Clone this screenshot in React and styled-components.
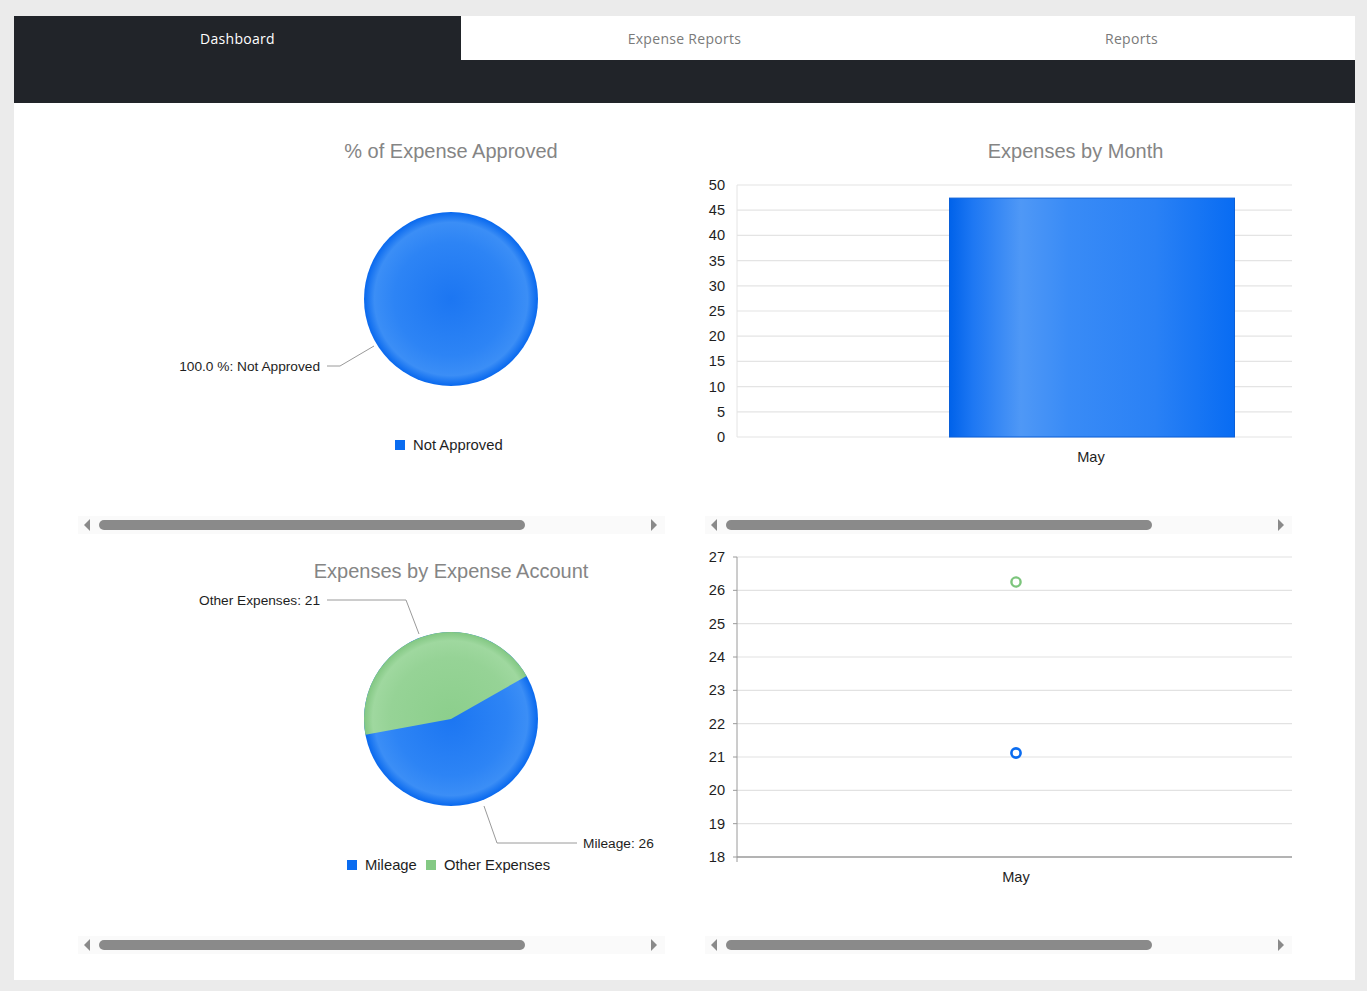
import React from "react";
import styled, { createGlobalStyle } from "styled-components";

const GlobalStyle = createGlobalStyle`
  body {
    margin: 0;
    background: #ebebeb;
    font-family: "Liberation Sans", Arial, sans-serif;
  }
`;

const Page = styled.div`
  padding: 16px 12px 11px 14px;
`;

const Shell = styled.div`
  background: #ffffff;
`;

const Header = styled.header`
  background: #212429;
  height: 87px;
`;

const TabBar = styled.nav`
  display: grid;
  grid-template-columns: repeat(3, 1fr);
  height: 44px;
`;

const Tab = styled.a`
  display: flex;
  align-items: center;
  justify-content: center;
  font-family: "Open Sans", sans-serif;
  font-size: 14px;
  letter-spacing: 0.3px;
  font-weight: ${(props) => (props.$active ? 500 : 400)};
  color: ${(props) => (props.$active ? "#ffffff" : "#7a7a7a")};
  background: ${(props) => (props.$active ? "#212429" : "#ffffff")};
  cursor: pointer;
`;

const Content = styled.main`
  display: grid;
  grid-template-columns: 1fr 1fr;
  grid-auto-rows: 420px;
  column-gap: 40px;
  padding: 27px 63px 10px 64px;
`;

const Card = styled.section`
  display: flex;
  flex-direction: column;
`;

const ChartSvg = styled.svg`
  display: block;
  width: 100%;
  height: 386px;
  font-family: "Liberation Sans", Arial, sans-serif;
`;

const ChartTitle = styled.text`
  font-size: 20px;
  fill: #858585;
`;

const SliceLabel = styled.text`
  font-size: 13.7px;
  fill: #1e1e1e;
`;

const LegendText = styled.text`
  font-size: 14.8px;
  fill: #1e1e1e;
`;

const AxisText = styled.text`
  font-size: 14.6px;
  fill: #1e1e1e;
`;

const Leader = styled.polyline`
  fill: none;
  stroke: #9a9a9a;
`;

const Scrollbar = styled.div`
  display: flex;
  align-items: center;
  height: 18px;
  padding: 0 8px 0 6px;
  background: #fafafa;
`;

const ScrollArrow = styled.span`
  width: 0;
  height: 0;
  border-top: 6px solid transparent;
  border-bottom: 6px solid transparent;
  ${(props) =>
    props.$dir === "left"
      ? "border-right: 6px solid #8a8a8a;"
      : "border-left: 6px solid #8a8a8a; margin-left: auto;"}
`;

const ScrollThumb = styled.span`
  width: 426px;
  height: 10px;
  margin-left: 9px;
  border-radius: 5px;
  background: #8a8a8a;
`;

const BLUE = "#0a6cf0";
const GREEN = "#84c984";

function Title({ x = 373, children }) {
  return (
    <ChartTitle x={x} y={21} textAnchor="middle" dominantBaseline="central">
      {children}
    </ChartTitle>
  );
}

function Gradients({ id, cx, cy, r }) {
  return (
    <defs>
      <radialGradient id={`${id}-blue`} gradientUnits="userSpaceOnUse" cx={cx} cy={cy} r={r}>
        <stop offset="0%" stopColor="#1c76f2" />
        <stop offset="65%" stopColor="#2d84f5" />
        <stop offset="88%" stopColor="#3b8ef6" />
        <stop offset="100%" stopColor="#0868ee" />
      </radialGradient>
      <radialGradient id={`${id}-green`} gradientUnits="userSpaceOnUse" cx={cx} cy={cy} r={r}>
        <stop offset="0%" stopColor="#8ccf8c" />
        <stop offset="70%" stopColor="#96d396" />
        <stop offset="90%" stopColor="#9fd89f" />
        <stop offset="100%" stopColor="#82c782" />
      </radialGradient>
    </defs>
  );
}

function LegendItem({ x, color, label }) {
  return (
    <g>
      <rect x={x} y={310} width={10} height={10} fill={color} />
      <LegendText x={x + 18} y={315} dominantBaseline="central">
        {label}
      </LegendText>
    </g>
  );
}

function ApprovalPie() {
  return (
    <ChartSvg viewBox="0 0 587 386">
      <Title>% of Expense Approved</Title>
      <Gradients id="ap" cx={373} cy={169} r={87} />
      <circle cx={373} cy={169} r={87} fill="url(#ap-blue)" />
      <Leader points="249,236 262,236 296,216" />
      <SliceLabel x={242} y={236} textAnchor="end" dominantBaseline="central">
        100.0 %: Not Approved
      </SliceLabel>
      <LegendItem x={317} color={BLUE} label="Not Approved" />
    </ChartSvg>
  );
}

function AccountPie() {
  // Mileage 26, Other Expenses 21
  const cx = 373;
  const cy = 169;
  const r = 87;
  const a1 = (-29.6 * Math.PI) / 180;
  const a2 = (-190.5 * Math.PI) / 180;
  const p1 = [cx + r * Math.cos(a1), cy + r * Math.sin(a1)];
  const p2 = [cx + r * Math.cos(a2), cy + r * Math.sin(a2)];
  const green = `M${cx},${cy} L${p1[0]},${p1[1]} A${r},${r} 0 0 0 ${p2[0]},${p2[1]} Z`;
  return (
    <ChartSvg viewBox="0 0 587 386">
      <Title>Expenses by Expense Account</Title>
      <Gradients id="acc" cx={cx} cy={cy} r={r} />
      <circle cx={cx} cy={cy} r={r} fill="url(#acc-blue)" />
      <path d={green} fill="url(#acc-green)" />
      <Leader points="249,50 328,50 341,84" />
      <SliceLabel x={242} y={50} textAnchor="end" dominantBaseline="central">
        Other Expenses: 21
      </SliceLabel>
      <Leader points="406,256 419,293 499,293" />
      <SliceLabel x={505} y={293} dominantBaseline="central">
        Mileage: 26
      </SliceLabel>
      <LegendItem x={269} color={BLUE} label="Mileage" />
      <LegendItem x={348} color={GREEN} label="Other Expenses" />
    </ChartSvg>
  );
}

function MonthBars() {
  const ticks = Array.from({ length: 11 }, (_, i) => i * 5);
  const y = (v) => 307 - v * 5.04;
  return (
    <ChartSvg viewBox="0 0 587 386">
      <Title x={370.5}>Expenses by Month</Title>
      <defs>
        <linearGradient id="bar-fill" x1="0" x2="1" y1="0" y2="0">
          <stop offset="0%" stopColor="#0062ea" />
          <stop offset="8%" stopColor="#1d77f3" />
          <stop offset="25%" stopColor="#4f98f6" />
          <stop offset="42%" stopColor="#398bf6" />
          <stop offset="72%" stopColor="#2a81f5" />
          <stop offset="100%" stopColor="#086cf3" />
        </linearGradient>
      </defs>
      <line x1={32} x2={32} y1={55} y2={307} stroke="#e4e4e4" />
      {ticks.map((v) => (
        <g key={v}>
          <line x1={32} x2={587} y1={y(v)} y2={y(v)} stroke="#e4e4e4" strokeWidth={1.2} />
          <AxisText x={20} y={y(v)} textAnchor="end" dominantBaseline="central">
            {v}
          </AxisText>
        </g>
      ))}
      <rect x={244.5} y={y(47.4)} width={285} height={y(0) - y(47.4)} fill="url(#bar-fill)" stroke="#0a5fd8" />
      <AxisText x={386} y={327} textAnchor="middle" dominantBaseline="central">
        May
      </AxisText>
    </ChartSvg>
  );
}

function MonthPoints() {
  const ticks = Array.from({ length: 10 }, (_, i) => 18 + i);
  const y = (v) => 7 + (27 - v) * (300 / 9);
  return (
    <ChartSvg viewBox="0 0 587 386">
      {ticks.map((v) => (
        <g key={v}>
          <line
            x1={32}
            x2={587}
            y1={y(v)}
            y2={y(v)}
            stroke={v === 18 ? "#9a9a9a" : "#e2e2e2"}
            strokeWidth={v === 18 ? 1.3 : 1.2}
          />
          <line x1={28} x2={32} y1={y(v)} y2={y(v)} stroke="#9a9a9a" />
          <AxisText x={20} y={y(v)} textAnchor="end" dominantBaseline="central">
            {v}
          </AxisText>
        </g>
      ))}
      <line x1={32} x2={32} y1={7} y2={312} stroke="#9a9a9a" />
      <circle cx={311} cy={y(26.25)} r={4.6} fill="#fff" stroke="#7cc57c" strokeWidth={2.4} />
      <circle cx={311} cy={y(21.12)} r={4.6} fill="#fff" stroke={BLUE} strokeWidth={2.6} />
      <AxisText x={311} y={327} textAnchor="middle" dominantBaseline="central">
        May
      </AxisText>
    </ChartSvg>
  );
}

function ChartCard({ children }) {
  return (
    <Card>
      {children}
      <Scrollbar>
        <ScrollArrow $dir="left" />
        <ScrollThumb />
        <ScrollArrow $dir="right" />
      </Scrollbar>
    </Card>
  );
}

const tabs = ["Dashboard", "Expense Reports", "Reports"];

export default function App() {
  return (
    <>
      <GlobalStyle />
      <Page>
        <Shell>
          <Header>
            <TabBar>
              {tabs.map((t, i) => (
                <Tab key={t} $active={i === 0}>
                  {t}
                </Tab>
              ))}
            </TabBar>
          </Header>
          <Content>
            <ChartCard>
              <ApprovalPie />
            </ChartCard>
            <ChartCard>
              <MonthBars />
            </ChartCard>
            <ChartCard>
              <AccountPie />
            </ChartCard>
            <ChartCard>
              <MonthPoints />
            </ChartCard>
          </Content>
        </Shell>
      </Page>
    </>
  );
}
